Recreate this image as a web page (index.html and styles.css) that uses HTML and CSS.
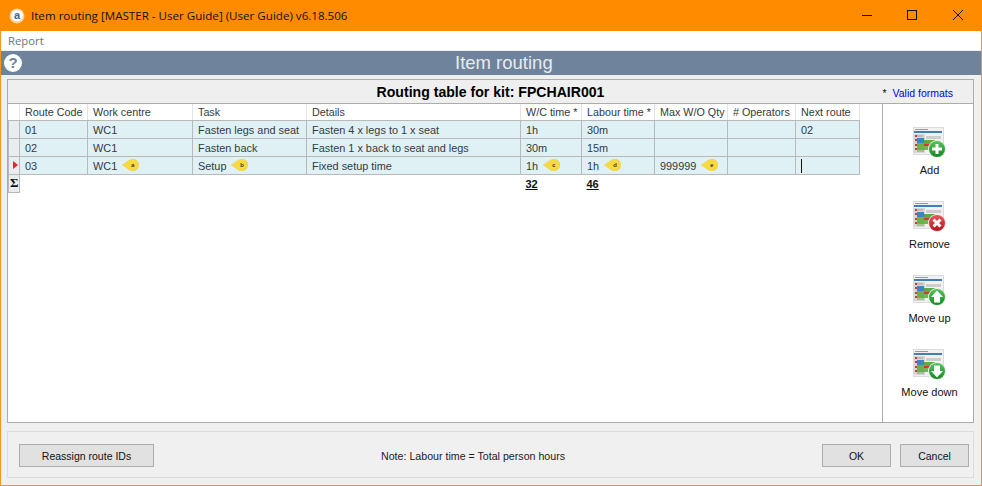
FILE: index.html
```html
<!DOCTYPE html>
<html lang="en">
<head>
<meta charset="utf-8">
<title>Item routing</title>
<link rel="stylesheet" href="styles.css">
</head>
<body>
<svg class="defs" width="0" height="0" aria-hidden="true">
  <defs>
    <symbol id="sheet" viewBox="0 0 33 31">
      <rect x="0" y="0" width="31" height="28" fill="#dcdcdc"/>
      <rect x="1" y="1" width="29" height="26" fill="#f1f1f1"/>
      <rect x="2" y="2" width="13" height="1" fill="#9a9a9a"/>
      <rect x="1" y="4" width="28" height="2" fill="#3f7fb8"/>
      <rect x="1" y="7" width="11" height="19" fill="#d6d6d6"/>
      <rect x="2" y="8" width="2" height="2" fill="#d8353a"/>
      <rect x="4" y="8" width="6" height="2" fill="#bdbdbd"/>
      <rect x="2" y="12" width="2" height="2" fill="#d8353a"/>
      <rect x="4" y="11" width="7" height="5" fill="#3a86c2"/>
      <rect x="2" y="17" width="2" height="2" fill="#d8353a"/>
      <rect x="4" y="16" width="7" height="7" fill="#6cb04c"/>
      <rect x="2" y="21" width="2" height="2" fill="#d8353a"/>
      <rect x="4" y="23" width="7" height="2" fill="#a3c192"/>
      <rect x="11" y="13" width="11" height="4" fill="#5fa845"/>
      <rect x="11" y="17" width="14" height="2" fill="#d8353a"/>
      <rect x="11" y="19" width="12" height="4" fill="#74b454"/>
      <rect x="13" y="9" width="15" height="3" fill="#cdcdcd"/>
    </symbol>
    <symbol id="tag-shape" viewBox="0 0 18 13">
      <path d="M0 6C3.500 4.500 6.500 0 11 0a6 6 0 0 1 0 12C6.500 12 3.500 7.500 0 6Z" fill="#f9da3e"/>
    </symbol>
    <linearGradient id="green" x1="0" y1="0" x2="0" y2="1">
      <stop offset="0" stop-color="#57c45a"/>
      <stop offset="1" stop-color="#128a22"/>
    </linearGradient>
    <linearGradient id="red" x1="0" y1="0" x2="0" y2="1">
      <stop offset="0" stop-color="#e9565a"/>
      <stop offset="1" stop-color="#b0161c"/>
    </linearGradient>
  </defs>
</svg>

<div class="window">
  <header class="titlebar">
    <svg class="app-icon" width="16" height="16" viewBox="0 0 16 16" aria-hidden="true">
      <circle cx="8" cy="8" r="7.500" fill="#f8cf96"/>
      <circle cx="8" cy="7.500" r="6" fill="#fbfbfb"/>
      <text x="8" y="11" text-anchor="middle" class="app-letter">a</text>
    </svg>
    <span class="title-text">Item routing [MASTER - User Guide] (User Guide) v6.18.506</span>
    <div class="win-controls">
      <svg width="46" height="31" viewBox="0 0 46 31" aria-hidden="true"><path d="M18 15.500H28" stroke="#111" fill="none"/></svg>
      <svg width="46" height="31" viewBox="0 0 46 31" aria-hidden="true"><rect x="17.500" y="10.500" width="9" height="9" stroke="#111" fill="none"/></svg>
      <svg width="46" height="31" viewBox="0 0 46 31" aria-hidden="true"><path d="M17 10L27 20M27 10L17 20" stroke="#111" fill="none"/></svg>
    </div>
  </header>

  <nav class="menubar"><span>Report</span></nav>

  <div class="banner">
    <svg class="help" width="18" height="18" viewBox="0 0 18 18" aria-hidden="true">
      <circle cx="9" cy="9" r="9" fill="#fff"/>
      <text x="9" y="14" text-anchor="middle" class="help-mark">?</text>
    </svg>
    <h1>Item routing</h1>
  </div>

  <main class="content">
    <div class="table-title">
      <h2>Routing table for kit: FPCHAIR001</h2>
      <a class="formats"><span class="star">*</span>Valid formats</a>
    </div>

    <div class="table-panel">
      <div class="grid-area">
        <table class="grid">
          <colgroup>
            <col class="c0"><col class="c1"><col class="c2"><col class="c3"><col class="c4"><col class="c5"><col class="c6"><col class="c7"><col class="c8"><col class="c9">
          </colgroup>
          <thead>
            <tr><th class="corner"></th><th>Route Code</th><th>Work centre</th><th>Task</th><th>Details</th><th>W/C time *</th><th>Labour time *</th><th>Max W/O Qty</th><th># Operators</th><th>Next route</th></tr>
          </thead>
          <tbody>
            <tr><td class="rowhead"></td><td>01</td><td>WC1</td><td>Fasten legs and seat</td><td>Fasten 4 x legs to 1 x seat</td><td>1h</td><td>30m</td><td></td><td></td><td>02</td></tr>
            <tr><td class="rowhead"></td><td>02</td><td>WC1</td><td>Fasten back</td><td>Fasten 1 x back to seat and legs</td><td>30m</td><td>15m</td><td></td><td></td><td></td></tr>
            <tr>
              <td class="rowhead"><span class="pointer"></span></td>
              <td>03</td>
              <td><span class="tagged">WC1<svg class="tag" width="18" height="13" viewBox="0 0 18 13" aria-hidden="true"><use href="#tag-shape"/><text x="11" y="8" text-anchor="middle" class="tag-letter">a</text></svg></span></td>
              <td><span class="tagged">Setup<svg class="tag" width="18" height="13" viewBox="0 0 18 13" aria-hidden="true"><use href="#tag-shape"/><text x="11" y="8" text-anchor="middle" class="tag-letter">b</text></svg></span></td>
              <td>Fixed setup time</td>
              <td><span class="tagged">1h<svg class="tag" width="18" height="13" viewBox="0 0 18 13" aria-hidden="true"><use href="#tag-shape"/><text x="11" y="8" text-anchor="middle" class="tag-letter">c</text></svg></span></td>
              <td><span class="tagged">1h<svg class="tag" width="18" height="13" viewBox="0 0 18 13" aria-hidden="true"><use href="#tag-shape"/><text x="11" y="8" text-anchor="middle" class="tag-letter">d</text></svg></span></td>
              <td><span class="tagged">999999<svg class="tag" width="18" height="13" viewBox="0 0 18 13" aria-hidden="true"><use href="#tag-shape"/><text x="11" y="8" text-anchor="middle" class="tag-letter">e</text></svg></span></td>
              <td></td>
              <td><span class="caret"></span></td>
            </tr>
          </tbody>
          <tfoot>
            <tr><td class="sigma">Σ</td><td></td><td></td><td></td><td></td><td><b>32</b></td><td><b>46</b></td><td></td><td></td><td></td></tr>
          </tfoot>
        </table>
      </div>

      <aside class="actions">
        <button class="action" type="button">
          <svg width="33" height="31" viewBox="0 0 33 31" aria-hidden="true"><use href="#sheet"/><circle cx="24" cy="22" r="9" fill="#e8f3e4"/><circle cx="24" cy="22" r="8" fill="url(#green)"/><path d="M24 17V27M19 22H29" stroke="#fff" stroke-width="3"/></svg>
          <span>Add</span>
        </button>
        <button class="action" type="button">
          <svg width="33" height="31" viewBox="0 0 33 31" aria-hidden="true"><use href="#sheet"/><circle cx="24" cy="22" r="9" fill="#f3e4e4"/><circle cx="24" cy="22" r="8" fill="url(#red)"/><path d="M20.500 18.500L27.500 25.500M27.500 18.500L20.500 25.500" stroke="#fff" stroke-width="3"/></svg>
          <span>Remove</span>
        </button>
        <button class="action" type="button">
          <svg width="33" height="31" viewBox="0 0 33 31" aria-hidden="true"><use href="#sheet"/><circle cx="24" cy="22" r="9" fill="#e8f3e4"/><circle cx="24" cy="22" r="8" fill="url(#green)"/><path d="M24 15.500L30 22H27V27.500H21V22H18Z" fill="#fff"/></svg>
          <span>Move up</span>
        </button>
        <button class="action" type="button">
          <svg width="33" height="31" viewBox="0 0 33 31" aria-hidden="true"><use href="#sheet"/><circle cx="24" cy="22" r="9" fill="#e8f3e4"/><circle cx="24" cy="22" r="8" fill="url(#green)"/><path d="M24 28.500L30 22H27V16.500H21V22H18Z" fill="#fff"/></svg>
          <span>Move down</span>
        </button>
      </aside>
    </div>

    <footer class="footer">
      <button class="btn btn-wide" type="button">Reassign route IDs</button>
      <span class="note">Note: Labour time = Total person hours</span>
      <div class="footer-right">
        <button class="btn" type="button">OK</button>
        <button class="btn" type="button">Cancel</button>
      </div>
    </footer>
  </main>
</div>
</body>
</html>
```

FILE: styles.css
```css
* { box-sizing: border-box; }
html, body { margin: 0; padding: 0; }
body {
  width: 982px;
  height: 486px;
  overflow: hidden;
  font-family: "Liberation Sans", Arial, sans-serif;
  font-size: 11px;
  color: #222;
}
.defs { position: absolute; }
.window {
  width: 982px;
  height: 486px;
  display: flex;
  flex-direction: column;
  background: #f0f0f0;
  border: 1px solid #f7941d;
  border-top: 0;
}
.titlebar {
  height: 31px;
  margin: 0 -1px;
  flex: none;
  display: flex;
  align-items: center;
  background: #ff8c00;
  padding-left: 9px;
}
.app-icon { flex: none; }
.app-letter { font: bold 11px "Liberation Sans", sans-serif; fill: #44648a; }
.title-text {
  margin-left: 6px;
  font-family: "Open Sans", sans-serif;
  font-size: 11.600px;
  color: #111;
  white-space: nowrap;
}
.win-controls { margin-left: auto; display: flex; }
.win-controls svg { display: block; }
.menubar {
  height: 19px;
  flex: none;
  background: #fff;
  display: flex;
  align-items: center;
  padding-left: 7px;
  font-family: "Open Sans", sans-serif;
  font-size: 11.300px;
  color: #6d7480;
}
.banner {
  margin-top: 1px;
  height: 24px;
  flex: none;
  background: #6f839c;
  display: flex;
  align-items: center;
  padding-left: 3px;
}
.help { flex: none; }
.help-mark { font: bold 15px "Liberation Sans", sans-serif; fill: #6f839c; }
.banner h1 {
  margin: 0 0 0 433px;
  font-size: 18.500px;
  font-weight: 400;
  color: #e8ebef;
  white-space: nowrap;
}
.content {
  flex: 1;
  display: flex;
  flex-direction: column;
  padding: 4px 7px 7px 6px;
  min-height: 0;
}
.table-title {
  height: 25px;
  flex: none;
  border: 1px solid #acacac;
  background: #efefef;
  display: flex;
  align-items: center;
  justify-content: center;
  position: relative;
}
.table-title h2 {
  margin: 0;
  font-size: 14.100px;
  font-weight: 700;
  color: #000;
  white-space: nowrap;
}
.formats {
  position: absolute;
  right: 20px;
  top: 7px;
  color: #0000ee;
  font-size: 10.500px;
  white-space: nowrap;
}
.star { margin-right: 6px; color: #111; }
.table-panel {
  height: 320px;
  flex: none;
  margin-top: -1px;
  display: flex;
  background: #fff;
  border: 1px solid #acacac;
}
.grid-area { width: 875px; flex: none; border-right: 1px solid #acacac; }
.grid {
  border-collapse: collapse;
  table-layout: fixed;
  width: 851px;
}
.c0 { width: 11px; }
.c1 { width: 68px; }
.c2 { width: 105px; }
.c3 { width: 114px; }
.c4 { width: 214px; }
.c5 { width: 61px; }
.c6 { width: 73px; }
.c7 { width: 73px; }
.c8 { width: 68px; }
.c9 { width: 64px; }
.grid th, .grid td {
  height: 18px;
  padding: 0 0 0 5px;
  font-size: 10.900px;
  font-weight: 400;
  text-align: left;
  white-space: nowrap;
  overflow: hidden;
  color: #333a42;
}
.grid th {
  height: 16px;
  font-size: 10.750px;
  border-right: 1px solid #e4e4e4;
  border-bottom: 1px solid #b9b9b9;
}
.grid tbody td {
  background: #e0f1f5;
  border: 1px solid #b9b9b9;
  padding-top: 1px;
}
.grid tbody .rowhead {
  background: #e9edf0;
  padding: 0;
  text-align: left;
}
.pointer {
  display: block;
  margin-left: 4px;
  width: 0;
  height: 0;
  border-left: 5px solid #e8242a;
  border-top: 4px solid transparent;
  border-bottom: 4px solid transparent;
}
.tagged {
  display: flex;
  align-items: center;
  height: 13px;
}
.tag {
  display: block;
  flex: none;
  margin: 0 0 1px 5px;
  filter: drop-shadow(0.5px 0.5px 0 #c4c0a0);
}
.tag-letter { font: bold 6px "Liberation Sans", sans-serif; fill: #333; }
.caret {
  display: block;
  width: 1px;
  height: 14px;
  background: #111;
}
.grid tfoot td { height: 18px; padding-top: 2px; color: #111; }
.grid tfoot b { text-decoration: underline; font-size: 11px; }
.grid tfoot .sigma {
  padding: 0 0 0 1px;
  background: #e9edf0;
  border: 1px solid #b9b9b9;
  font-family: "Liberation Serif", serif;
  font-weight: 700;
  font-size: 13px;
}
.actions {
  flex: 1;
  display: flex;
  flex-direction: column;
  align-items: center;
  padding-top: 23px;
  padding-left: 3px;
  gap: 17px;
}
.action {
  border: 0;
  background: none;
  padding: 0;
  display: flex;
  flex-direction: column;
  align-items: center;
  gap: 6px;
  height: 57px;
  font: 11px "Liberation Sans", sans-serif;
  color: #111;
}
.action svg { display: block; }
.footer {
  margin-top: 8px;
  height: 47px;
  flex: none;
  border: 1px solid #dcdcdc;
  display: flex;
  align-items: center;
  padding: 2px 4px 0 11px;
}
.btn {
  width: 69px;
  height: 23px;
  background: #e1e1e1;
  border: 1px solid #adadad;
  padding: 0;
  font: 10.500px "Liberation Sans", sans-serif;
  color: #111;
}
.btn-wide { width: 135px; }
.note {
  margin-left: 227px;
  font-size: 10.650px;
  color: #222;
  white-space: nowrap;
}
.footer-right { margin-left: auto; display: flex; gap: 9px; }
```
